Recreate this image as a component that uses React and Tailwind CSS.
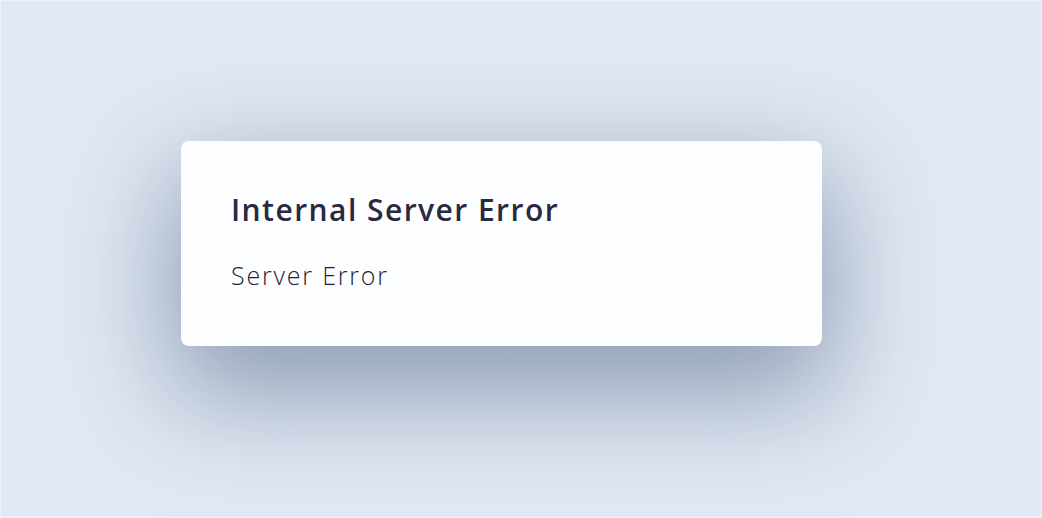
export default function App() {
  return (
    <div className="h-[518px] w-[1042px] overflow-hidden border border-[#edf1f8] bg-[#e2e9f4]" style={{ fontFamily: '"Open Sans", "Noto Sans", sans-serif' }}>
      <div className="pl-[180px] pt-[140px]">
        <div className="flex h-[205px] w-[641px] flex-col rounded-lg bg-[#fdfeff] px-[50px] pt-[49px] shadow-[0_40px_110px_10px_rgba(95,115,145,0.65)]">
          <h1 className="text-[30px] font-semibold leading-[40px] tracking-[1.45px] text-[#2a2942]">Internal Server Error</h1>
          <p className="mt-[28px] text-[25px] font-light leading-[34px] tracking-[1.8px] text-[#1f1d38]">Server Error</p>
        </div>
      </div>
    </div>
  );
}
